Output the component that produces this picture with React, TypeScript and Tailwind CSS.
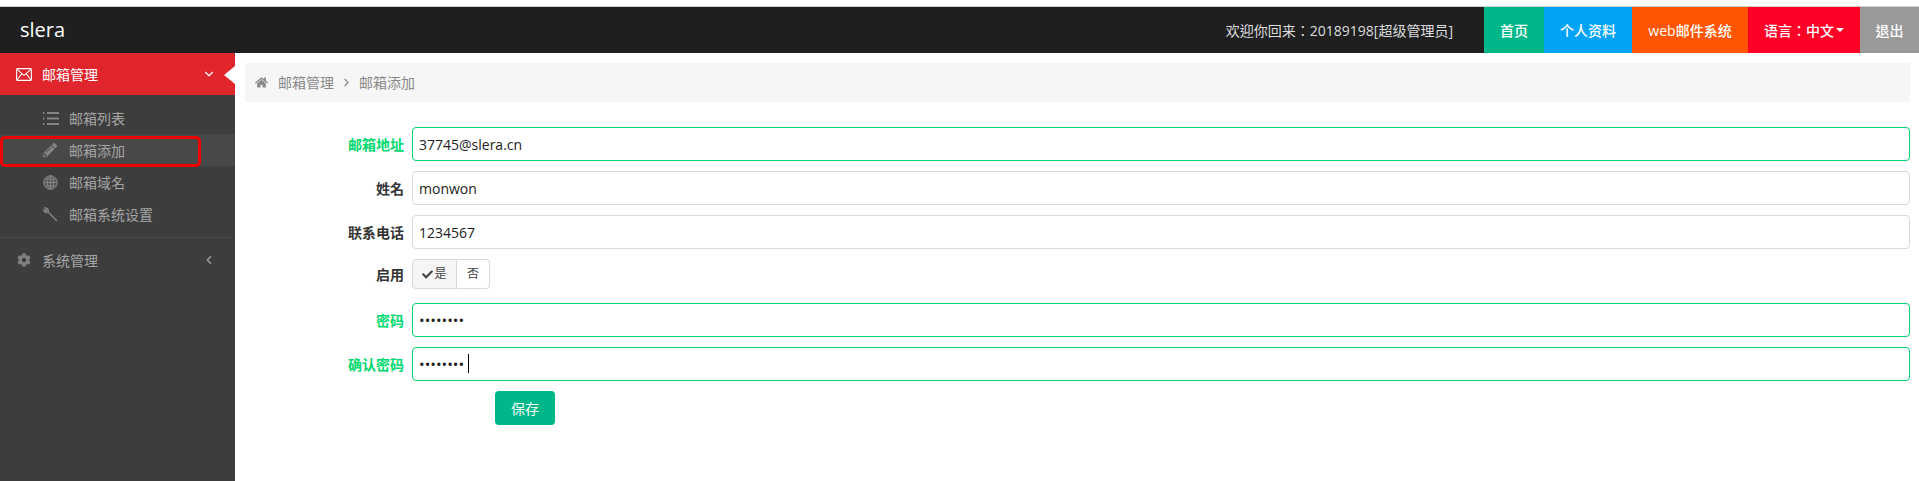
import React from 'react'
import { FaCheck, FaCog, FaHome, FaPencilAlt } from 'react-icons/fa'
import { ChevronDown, ChevronLeft, ChevronRight } from 'lucide-react'

const EnvelopeIcon = () => (
  <svg width="16" height="13" viewBox="0 0 16 13" fill="none" stroke="currentColor" strokeWidth="1.1">
    <rect x="0.6" y="0.6" width="14.8" height="11.8" rx="1" />
    <path d="M1 1.4 L8 7.4 L15 1.4 M1 12 L5.8 5.6 M15 12 L10.2 5.6" />
  </svg>
)

const ListIcon = () => (
  <svg width="16" height="15" viewBox="0 0 16 15" fill="currentColor">
    <rect x="0" y="1" width="1.5" height="2" />
    <rect x="0" y="6.5" width="1.5" height="2" />
    <rect x="0" y="12" width="1.5" height="2" />
    <rect x="4" y="1" width="12" height="2" />
    <rect x="4" y="6.5" width="12" height="2" />
    <rect x="4" y="12" width="12" height="2" />
  </svg>
)

const GlobeIcon = () => (
  <svg width="15" height="15" viewBox="0 0 15 15" fill="none" stroke="currentColor" strokeWidth="1">
    <circle cx="7.5" cy="7.5" r="6.8" fill="currentColor" fillOpacity="0.35" />
    <ellipse cx="7.5" cy="7.5" rx="3.2" ry="6.8" />
    <path d="M7.5 0.7 V14.3 M0.7 7.5 H14.3 M1.6 4 H13.4 M1.6 11 H13.4" />
  </svg>
)

const WrenchIcon = () => (
  <svg width="15" height="15" viewBox="0 0 15 15" fill="none" stroke="currentColor" strokeWidth="1.3">
    <path d="M14 14 L5.2 5 M5.2 5 C6 3 4.6 .9 2.2 .9 L4 3 L3 4.4 L.8 2.6 C.8 5 3 6.2 5.2 5" />
  </svg>
)

const subMenu = [
  { label: '邮箱列表', icon: <ListIcon /> },
  { label: '邮箱添加', icon: <FaPencilAlt size={14} />, active: true },
  { label: '邮箱域名', icon: <GlobeIcon /> },
  { label: '邮箱系统设置', icon: <WrenchIcon /> },
]

const navLinks = [
  { label: '首页', cls: 'w-[60px] bg-[#00b78a]' },
  { label: '个人资料', cls: 'w-[88px] bg-[#00a3f5]' },
  { label: 'web邮件系统', cls: 'w-[116px] bg-[#ff5500]' },
  { label: '语言：中文', cls: 'w-[112px] bg-[#ff0026]', caret: true },
  { label: '退出', cls: 'w-[59px] bg-[#999999]' },
]

const Field = ({ label, value, type = 'text', ok, caret }: { label: string; value: string; type?: string; ok?: boolean; caret?: boolean }) => (
  <div className="flex h-[34px] items-center">
    <label className={`w-[92px] pr-2 text-right text-[14px] font-bold ${ok ? 'text-[#00d96f]' : 'text-[#333333]'}`}>{label}</label>
    <div className="relative flex-1">
      <input
        readOnly
        type={type}
        value={value}
        className={`block h-[34px] w-full rounded border px-[6px] text-[#222222] outline-none ${type === 'password' ? 'text-[15px]' : 'text-[14px]'} ${ok ? 'border-[#00d96f]' : 'border-[#d9d9d9]'}`}
      />
      {caret && <span className="absolute left-[56px] top-[7px] h-[19px] w-px bg-black" />}
    </div>
  </div>
)

export default function App() {
  return (
    <div className="min-h-[481px] bg-white pt-[6px] font-['Open_Sans','Noto_Sans_CJK_TC',sans-serif] text-[14px]">
      <header className="flex h-[47px] items-center border-t border-[#cfcfcf] bg-[#1f1f1f] text-white">
        <div className="pl-[20px] text-[20px]">slera</div>
        <div className="ml-auto mr-[31px] text-[14px] text-[#dddddd]">欢迎你回来：20189198[超级管理员]</div>
        <nav className="flex h-full">
          {navLinks.map(link => (
            <a key={link.label} className={`flex items-center justify-center text-[14px] font-medium ${link.cls}`}>
              {link.label}
              {link.caret && <span className="ml-[2px] border-x-4 border-t-4 border-x-transparent border-t-white" />}
            </a>
          ))}
        </nav>
      </header>

      <div className="flex min-h-[428px]">
        <aside className="w-[235px] shrink-0 bg-[#3d3d3d] text-[#a6a6a6]">
          <div className="relative flex h-[42px] items-center bg-[#e1252d] pl-[16px] pr-[19px] text-white">
            <EnvelopeIcon />
            <span className="ml-[10px]">邮箱管理</span>
            <ChevronDown size={14} className="ml-auto" />
            <span className="absolute right-0 top-[13px] border-y-[9px] border-r-[11px] border-y-transparent border-r-white" />
          </div>
          <ul className="border-b border-[#4a4a4a] pb-[7px] pt-[7px]">
            {subMenu.map(item => (
              <li key={item.label} className={`flex h-[32px] items-center pl-[43px] ${item.active ? 'bg-[#484848]' : ''}`}>
                <span className="flex w-[26px] justify-start text-[#858585]">{item.icon}</span>
                {item.label}
              </li>
            ))}
          </ul>
          <div className="flex h-[44px] items-center pl-[17px] pr-[19px]">
            <FaCog size={14} className="text-[#808080]" />
            <span className="ml-[11px]">系统管理</span>
            <ChevronLeft size={14} className="ml-auto" />
          </div>
        </aside>

        <main className="flex-1 pl-[10px] pr-[9px] pt-[10px]">
          <div className="flex h-[39px] items-center bg-[#f6f6f6] pl-[10px] text-[#888888]">
            <FaHome size={13} />
            <span className="ml-[10px]">邮箱管理</span>
            <ChevronRight size={13} className="mx-[6px]" />
            <span>邮箱添加</span>
          </div>

          <form className="mt-[25px] flex flex-col gap-[10px] pl-[75px]">
            <Field label="邮箱地址" value="37745@slera.cn" ok />
            <Field label="姓名" value="monwon" />
            <Field label="联系电话" value="1234567" />
            <div className="flex h-[30px] items-center">
              <label className="w-[92px] pr-2 text-right font-bold text-[#333333]">启用</label>
              <div className="flex h-[30px] text-[12px] text-[#444444]">
                <span className="flex w-[45px] items-center justify-center gap-[1px] rounded-l border border-[#d9d9d9] bg-[#f5f5f5]">
                  <FaCheck size={11} />是
                </span>
                <span className="flex w-[33px] items-center justify-center rounded-r border border-l-0 border-[#d9d9d9]">否</span>
              </div>
            </div>
            <div className="mt-[4px]">
              <Field label="密码" value="12345678" type="password" ok />
            </div>
            <Field label="确认密码" value="12345678" type="password" ok caret />
            <button type="button" className="ml-[175px] h-[34px] w-[60px] rounded bg-[#00b78a] text-[14px] text-white">保存</button>
          </form>
        </main>
      </div>

      {/* red annotation box from the screenshot */}
      <div className="absolute left-0 top-[136px] h-[31px] w-[201px] rounded-[5px] border-[3px] border-[#f00000]" />
    </div>
  )
}
